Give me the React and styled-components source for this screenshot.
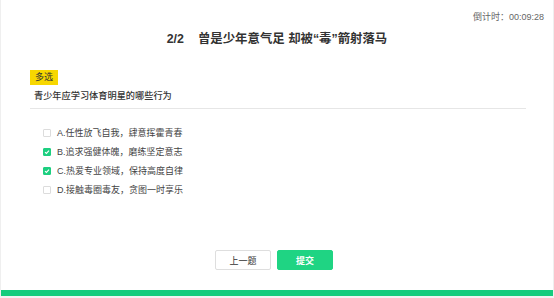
import React from "react";
import styled, { createGlobalStyle } from "styled-components";

const GlobalStyle = createGlobalStyle`
  html, body {
    margin: 0;
    padding: 0;
    background: #fff;
  }
  body {
    font-family: "Liberation Sans", "Noto Sans CJK SC", sans-serif;
  }
`;

const Page = styled.div`
  width: 554px;
  height: 298px;
  box-sizing: border-box;
  border-left: 1px solid #efefef;
  border-right: 1px solid #efefef;
  border-bottom: 2px solid #f2f2f2;
  display: flex;
  flex-direction: column;
`;

const TimerRow = styled.div`
  display: flex;
  justify-content: flex-end;
  padding: 11px 9px 0 0;
  font-size: 9px;
  line-height: 12px;
  color: #666;
`;

const Title = styled.div`
  margin-top: 7px;
  display: flex;
  justify-content: center;
  gap: 14px;
  font-size: 12.4px;
  line-height: 18px;
  font-weight: 700;
  color: #333;
`;

const Content = styled.div`
  margin-top: 18px;
  padding: 0 27px 0 29px;
`;

const Tag = styled.span`
  display: inline-block;
  background: #f7d700;
  color: #333;
  font-size: 9px;
  line-height: 15px;
  padding: 0 5px;
`;

const Question = styled.div`
  margin-top: 5px;
  padding: 0 0 6px 4px;
  font-size: 9.2px;
  line-height: 12px;
  font-weight: 500;
  color: #333;
  border-bottom: 1px solid #e6e6e6;
`;

const Options = styled.div`
  margin-top: 14px;
  padding-left: 13px;
  display: flex;
  flex-direction: column;
`;

const Option = styled.label`
  display: flex;
  align-items: center;
  gap: 6px;
  height: 19px;
  font-size: 9px;
  color: #444;
`;

const Box = styled.span`
  width: 8px;
  height: 8px;
  box-sizing: border-box;
  border-radius: 1px;
  border: 1px solid ${(p) => (p.$checked ? "#1dcf80" : "#dcdcdc")};
  background: ${(p) => (p.$checked ? "#1dcf80" : "#fff")};
  display: flex;
  align-items: center;
  justify-content: center;
`;

const Footer = styled.div`
  margin-top: auto;
  padding: 0 6px 20px 0;
  display: flex;
  justify-content: center;
  gap: 6px;
`;

const Button = styled.button`
  width: 56px;
  height: 20px;
  box-sizing: border-box;
  border-radius: 2px;
  font-family: inherit;
  font-size: 9px;
  padding: 0;
  border: 1px solid ${(p) => (p.$primary ? "#1fd483" : "#dedede")};
  background: ${(p) => (p.$primary ? "#1fd483" : "#fff")};
  color: ${(p) => (p.$primary ? "#fff" : "#333")};
  font-weight: ${(p) => (p.$primary ? 700 : 400)};
`;

const Bar = styled.div`
  height: 6px;
  background: #14cc7d;
`;

const options = [
  { text: "A.任性放飞自我，肆意挥霍青春", checked: false },
  { text: "B.追求强健体魄，磨练坚定意志", checked: true },
  { text: "C.热爱专业领域，保持高度自律", checked: true },
  { text: "D.接触毒圈毒友，贪图一时享乐", checked: false },
];

const Check = () => (
  <svg width="6" height="6" viewBox="0 0 6 6">
    <path d="M1 3.1 L2.4 4.4 L5 1.6" fill="none" stroke="#fff" strokeWidth="1.1" />
  </svg>
);

export default function App() {
  return (
    <>
      <GlobalStyle />
      <Page>
        <TimerRow>倒计时：00:09:28</TimerRow>
        <Title>
          <span>2/2</span>
          <span>曾是少年意气足 却被“毒”箭射落马</span>
        </Title>
        <Content>
          <Tag>多选</Tag>
          <Question>青少年应学习体育明星的哪些行为</Question>
          <Options>
            {options.map((o) => (
              <Option key={o.text}>
                <Box $checked={o.checked}>{o.checked && <Check />}</Box>
                {o.text}
              </Option>
            ))}
          </Options>
        </Content>
        <Footer>
          <Button>上一题</Button>
          <Button $primary>提交</Button>
        </Footer>
        <Bar />
      </Page>
    </>
  );
}
